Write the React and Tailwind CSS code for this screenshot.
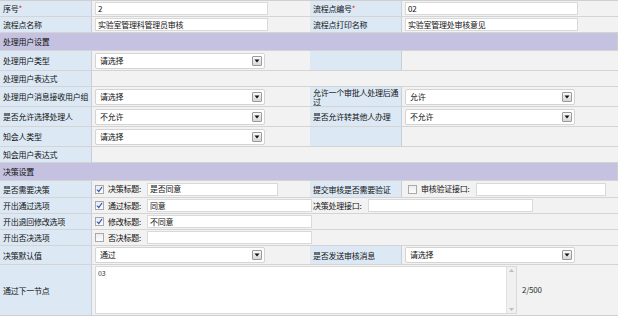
import React from "react";

const font = { fontFamily: '"Noto Sans CJK SC", "Noto Sans", sans-serif' };

function Label({ children, star, className = "" }) {
  return (
    <div className={`bg-[#dce9f5] border-r border-[#c5d0da] pl-[3px] pr-[1px] flex items-center text-[8px] leading-[9px] text-[#111] ${className}`}>
      <span>
        {children}
        {star && <span className="text-[#e02020]">*</span>}
      </span>
    </div>
  );
}

function Value({ children, className = "" }) {
  return (
    <div className={`bg-[#f2f2f2] pl-[3px] flex items-center text-[8px] text-[#111] ${className}`}>
      {children}
    </div>
  );
}

function Input({ value = "", w = "w-[173px]" }) {
  return (
    <div className={`${w} h-[13px] bg-white border border-[#d9d9d9] px-[2px] flex items-center text-[8px] text-[#111]`}>
      {value}
    </div>
  );
}

function Select({ value }) {
  return (
    <div className="w-[170px] h-[16px] bg-white border border-[#d4d4d4] rounded-[2px] pl-[4px] pr-[2px] flex items-center justify-between text-[8px] text-[#111]">
      <span>{value}</span>
      <div className="w-[10px] h-[10px] border border-[#9a9a9a] rounded-[1px] bg-gradient-to-b from-[#fafafa] to-[#d6d6d6] flex items-center justify-center">
        <svg width="6" height="4" viewBox="0 0 6 4">
          <path d="M0.5 0.5 L5.5 0.5 L3 3.5 Z" fill="#111" />
        </svg>
      </div>
    </div>
  );
}

function Check({ checked }) {
  return (
    <div className="w-[9px] h-[9px] border border-[#a9a9a9] bg-gradient-to-b from-[#ececec] to-[#fdfdfd] flex items-center justify-center shrink-0">
      {checked && (
        <svg width="7" height="7" viewBox="0 0 7 7">
          <path d="M1 3.6 L2.8 5.5 L6 1" stroke="#2e55c8" strokeWidth="1.2" fill="none" />
        </svg>
      )}
    </div>
  );
}

const row = "grid grid-cols-[92px_218px_92px_216px] border-b border-[#d4d4d4]";

function Section({ title }) {
  return (
    <div className="h-[18px] bg-[#c4c2e0] border-b border-[#d4d4d4] px-[3px] flex items-center text-[8px] text-[#111]">
      {title}
    </div>
  );
}

export default function App() {
  return (
    <div className="w-[620px] h-[317px] bg-white tracking-[-0.25px]" style={font}>
      <div className="w-[618px] border-t border-r border-[#cfcfcf] border-b">
        <div className={`${row} h-[16px]`}>
          <Label star>序号</Label>
          <Value><Input value="2" /></Value>
          <Label star>流程点编号</Label>
          <Value><Input value="02" /></Value>
        </div>
        <div className={`${row} h-[16px]`}>
          <Label>流程点名称</Label>
          <Value><Input value="实验室管理科管理员审核" /></Value>
          <Label>流程点打印名称</Label>
          <Value><Input value="实验室管理处审核意见" /></Value>
        </div>
        <Section title="处理用户设置" />
        <div className={`${row} h-[20px]`}>
          <Label>处理用户类型</Label>
          <Value><Select value="请选择" /></Value>
          <Label></Label>
          <Value></Value>
        </div>
        <div className={`${row} h-[16px]`}>
          <Label>处理用户表达式</Label>
          <Value className="col-span-3"></Value>
        </div>
        <div className={`${row} h-[20px]`}>
          <Label>处理用户消息接收用户组</Label>
          <Value><Select value="请选择" /></Value>
          <Label className="leading-[8px]">允许一个审批人处理后通过</Label>
          <Value><Select value="允许" /></Value>
        </div>
        <div className={`${row} h-[20px]`}>
          <Label>是否允许选择处理人</Label>
          <Value><Select value="不允许" /></Value>
          <Label>是否允许转其他人办理</Label>
          <Value><Select value="不允许" /></Value>
        </div>
        <div className={`${row} h-[20px]`}>
          <Label>知会人类型</Label>
          <Value><Select value="请选择" /></Value>
          <Label></Label>
          <Value></Value>
        </div>
        <div className={`${row} h-[16px]`}>
          <Label>知会用户表达式</Label>
          <Value className="col-span-3"></Value>
        </div>
        <Section title="决策设置" />
        <div className={`${row} h-[17px]`}>
          <Label>是否需要决策</Label>
          <Value className="gap-[4px]">
            <Check checked />
            <span className="w-[35px]">决策标题:</span>
            <Input value="是否同意" w="w-[131px]" />
          </Value>
          <Label>提交审核是否需要验证</Label>
          <Value className="gap-[4px] pl-[6px]">
            <Check />
            <span className="w-[51px]">审核验证接口:</span>
            <Input w="w-[130px]" />
          </Value>
        </div>
        <div className={`${row} h-[16px]`}>
          <Label>开出通过选项</Label>
          <Value className="col-span-3 gap-[4px]">
            <Check checked />
            <span className="w-[35px]">通过标题:</span>
            <Input value="同意" w="w-[165px]" />
            <span className="w-[51px] -ml-[3px]">决策处理接口:</span>
            <Input w="w-[165px]" />
          </Value>
        </div>
        <div className={`${row} h-[16px]`}>
          <Label>开出退回修改选项</Label>
          <Value className="col-span-3 gap-[4px]">
            <Check checked />
            <span className="w-[35px]">修改标题:</span>
            <Input value="不同意" w="w-[165px]" />
          </Value>
        </div>
        <div className={`${row} h-[16px]`}>
          <Label>开出否决选项</Label>
          <Value className="col-span-3 gap-[4px]">
            <Check />
            <span className="w-[35px]">否决标题:</span>
            <Input w="w-[165px]" />
          </Value>
        </div>
        <div className={`${row} h-[19px]`}>
          <Label>决策默认值</Label>
          <Value><Select value="通过" /></Value>
          <Label>是否发送审核消息</Label>
          <Value><Select value="请选择" /></Value>
        </div>
        <div className="grid grid-cols-[92px_526px] h-[50px]">
          <Label>通过下一节点</Label>
          <Value className="gap-[5px]">
            <div className="w-[422px] h-[48px] bg-white border border-[#dadada] flex">
              <div className="flex-1 px-[2px] pt-[2px] text-[7px] leading-[8px] text-[#333]">03</div>
              <div className="w-[10px] h-full bg-[#f0f0f0] border-l border-[#e2e2e2] flex flex-col items-center justify-between py-[2px]">
                <svg width="5" height="3" viewBox="0 0 5 3"><path d="M0 3 L2.5 0 L5 3 Z" fill="#bdbdbd" /></svg>
                <svg width="5" height="3" viewBox="0 0 5 3"><path d="M0 0 L5 0 L2.5 3 Z" fill="#bdbdbd" /></svg>
              </div>
            </div>
            <span className="text-[8px] text-[#333]">2/500</span>
          </Value>
        </div>
      </div>
    </div>
  );
}
